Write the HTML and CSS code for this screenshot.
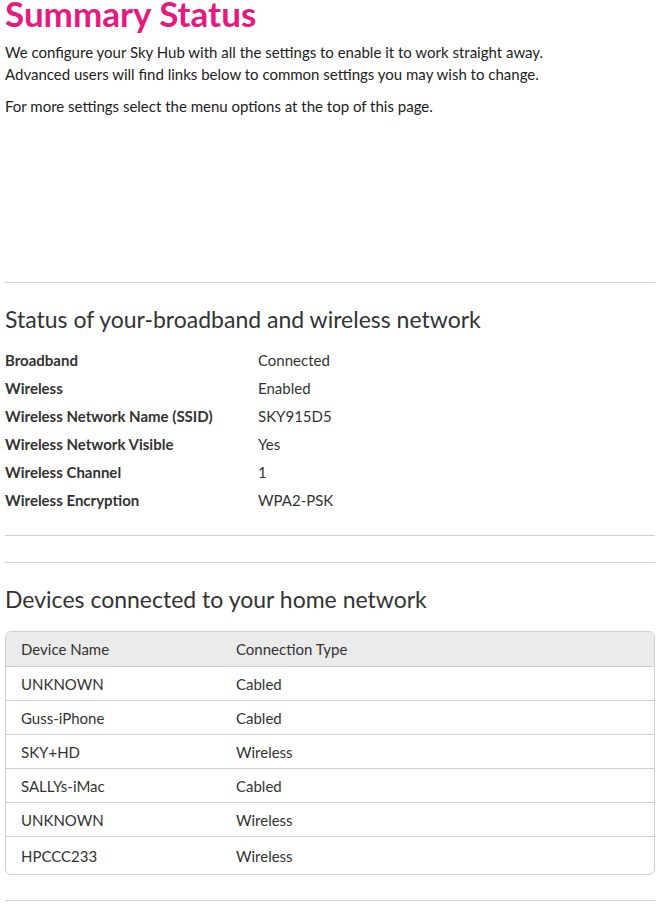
FILE: index.html
```html
<!DOCTYPE html>
<html lang="en">
<head>
    <meta charset="UTF-8">
    <meta name="viewport" content="width=device-width, initial-scale=1.0">
    <title>Summary Status</title>
    <link rel="stylesheet" href="styles.css">
</head>
<body>
    <div class="page">
        <h1>Summary Status</h1>
        <p>We configure your Sky Hub with all the settings to enable it to work straight away.<br>
        Advanced users will find links below to common settings you may wish to change.</p>
        <p>For more settings select the menu options at the top of this page.</p>

        <div class="spacer"></div>
        <hr>

        <h2>Status of your-broadband and wireless network</h2>
        <div class="status-list">
            <div class="status-label">Broadband</div>
            <div class="status-value">Connected</div>
            <div class="status-label">Wireless</div>
            <div class="status-value">Enabled</div>
            <div class="status-label">Wireless Network Name (SSID)</div>
            <div class="status-value">SKY915D5</div>
            <div class="status-label">Wireless Network Visible</div>
            <div class="status-value">Yes</div>
            <div class="status-label">Wireless Channel</div>
            <div class="status-value">1</div>
            <div class="status-label">Wireless Encryption</div>
            <div class="status-value">WPA2-PSK</div>
        </div>

        <hr>
        <hr class="second">

        <h2>Devices connected to your home network</h2>
        <div class="devices">
            <table>
                <thead>
                    <tr><th>Device Name</th><th>Connection Type</th></tr>
                </thead>
                <tbody>
                    <tr><td>UNKNOWN</td><td>Cabled</td></tr>
                    <tr><td>Guss-iPhone</td><td>Cabled</td></tr>
                    <tr><td>SKY+HD</td><td>Wireless</td></tr>
                    <tr><td>SALLYs-iMac</td><td>Cabled</td></tr>
                    <tr><td>UNKNOWN</td><td>Wireless</td></tr>
                    <tr><td>HPCCC233</td><td>Wireless</td></tr>
                </tbody>
            </table>
        </div>

        <hr class="last">
    </div>
</body>
</html>
```

FILE: styles.css
```css
body {
    margin: 0;
    font-family: Lato, "Open Sans", sans-serif;
    color: #222;
    background-color: white;
}
.page {
    width: 650px;
    margin-left: 5px;
}
h1 {
    margin: -7px 0 8px 0;
    font-size: 35px;
    line-height: 40px;
    font-weight: bold;
    color: #e5197f;
}
p {
    margin: 0 0 10px 0;
    font-size: 15px;
    line-height: 22px;
}
.spacer {
    height: 155px;
}
hr {
    margin: 0;
    border: none;
    border-top: 1px solid #cfcfcf;
}
hr.second {
    margin-top: 26px;
}
h2 {
    margin: 21px 0 12px 0;
    font-size: 23px;
    line-height: 30px;
    font-weight: normal;
    color: #333;
}
.status-list {
    display: grid;
    grid-template-columns: 253px 1fr;
    grid-auto-rows: 28px;
    align-items: center;
    font-size: 15px;
    color: #333;
    margin-bottom: 21px;
}
.status-label {
    font-weight: bold;
}
.devices {
    border: 1px solid #cfcfcf;
    border-radius: 6px;
    overflow: hidden;
    margin: 17px 0 25px 0;
}
table {
    width: 100%;
    border-collapse: collapse;
    font-size: 15px;
    color: #333;
}
th {
    height: 34px;
    background-color: #ebebeb;
    font-weight: normal;
    text-align: left;
}
th, td {
    padding: 0 0 0 15px;
    border-bottom: 1px solid #cfcfcf;
}
td {
    height: 33px;
}
th:first-child, td:first-child {
    width: 200px;
}
tbody tr:last-child td {
    border-bottom: none;
    height: 37px;
}
```
